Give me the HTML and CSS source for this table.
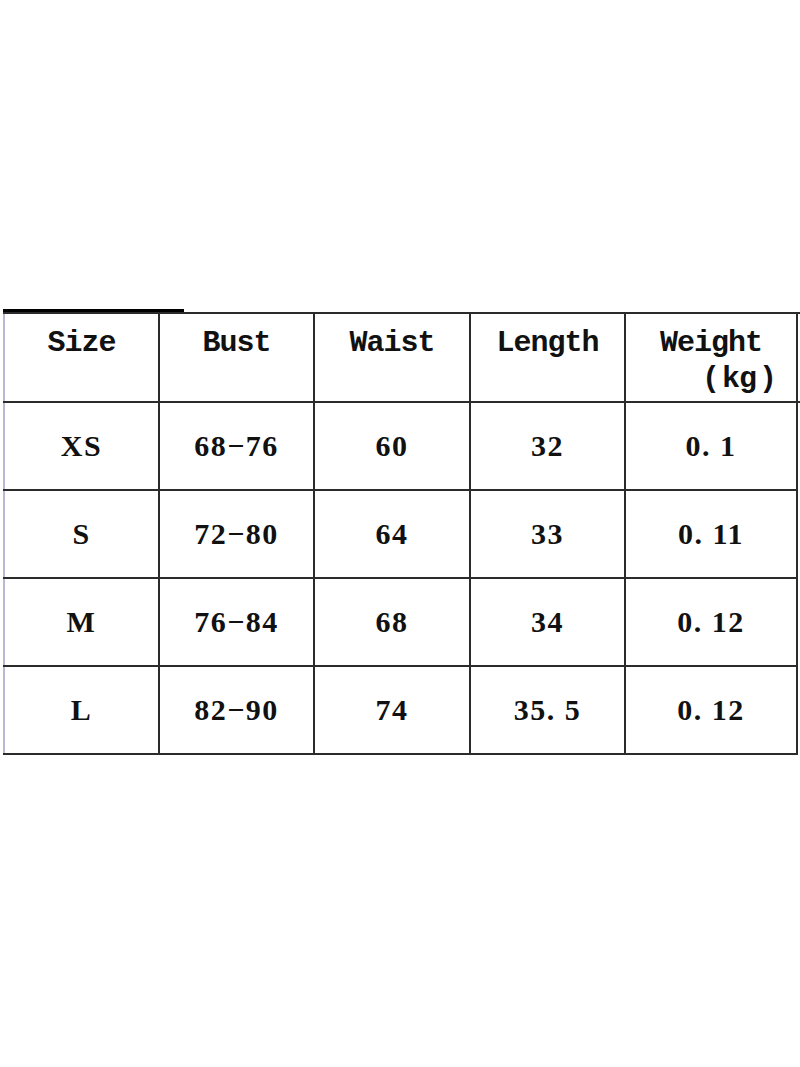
FILE: index.html
```html
<!DOCTYPE html>
<html>
<head>
<meta charset="utf-8">
<link rel="stylesheet" href="styles.css">
</head>
<body>
<div class="page">
  <div class="topbar"></div>
  <table class="sizes">
    <colgroup>
      <col class="c1"><col class="c2"><col class="c3"><col class="c4"><col class="c5"><col class="c6">
    </colgroup>
    <tr class="head">
      <th>Size</th>
      <th>Bust</th>
      <th>Waist</th>
      <th>Length</th>
      <th><span class="l1">Weight</span><span class="l2"><span class="p">(</span>kg<span class="p">)</span></span></th>
      <th class="extra"></th>
    </tr>
    <tr><td>XS</td><td>68−76</td><td>60</td><td>32</td><td>0. 1</td><td class="extra"></td></tr>
    <tr><td>S</td><td>72−80</td><td>64</td><td>33</td><td>0. 11</td><td class="extra"></td></tr>
    <tr><td>M</td><td>76−84</td><td>68</td><td>34</td><td>0. 12</td><td class="extra"></td></tr>
    <tr><td>L</td><td>82−90</td><td>74</td><td>35. 5</td><td>0. 12</td><td class="extra"></td></tr>
  </table>
</div>
</body>
</html>
```
FILE: styles.css
```css
html, body {
  margin: 0;
  padding: 0;
  background: #ffffff;
  overflow: hidden;
  width: 800px;
  height: 1067px;
}
.page {
  padding-top: 309px;
  padding-left: 3px;
}
.topbar {
  width: 181px;
  height: 3px;
  background: #000;
}
.sizes {
  border-collapse: collapse;
  table-layout: fixed;
  width: 1000px;
  color: #111;
}
.c1 { width: 155px; }
.c2 { width: 155px; }
.c3 { width: 156px; }
.c4 { width: 155px; }
.c5 { width: 172px; }
.c6 { width: 207px; }
.sizes th, .sizes td {
  border: 2px solid #2b2b2b;
  padding: 0;
  text-align: center;
}
.sizes tr > :first-child {
  border-left-color: #b9b9d6;
}
.sizes th.extra, .sizes td.extra {
  border-right: none;
  border-bottom-color: #fff;
}
.sizes th.extra { border-bottom-color: #2b2b2b; }
.head th {
  height: 76px;
  vertical-align: top;
  padding-top: 11px;
  font-family: "Liberation Mono", "DejaVu Sans Mono", monospace;
  font-weight: bold;
  font-size: 30px;
  letter-spacing: -1px;
  line-height: 36px;
}
.head .l1 { display: block; }
.head .l2 {
  display: block;
  text-align: right;
  padding-right: 17px;
}
.head .p {
  margin: 0 3px;
}
.sizes td {
  height: 86px;
  vertical-align: middle;
  font-family: "Liberation Serif", "Times New Roman", serif;
  font-weight: bold;
  font-size: 30px;
  letter-spacing: 1.5px;
}
```
